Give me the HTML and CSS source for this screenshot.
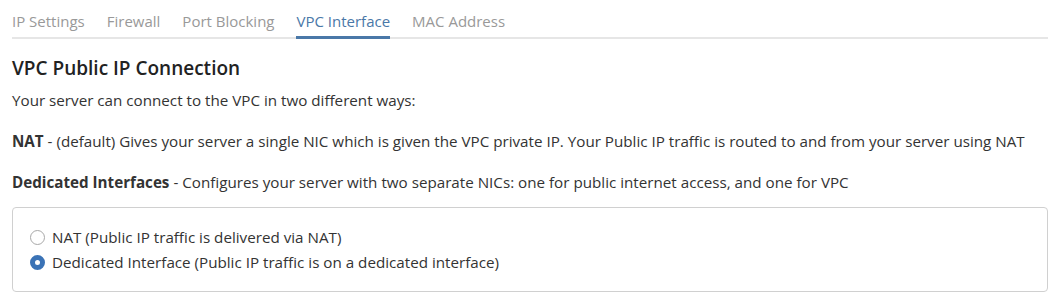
FILE: index.html
```html
<!DOCTYPE html>
<html lang="en">
<head>
    <meta charset="UTF-8">
    <title>VPC Interface</title>
    <link rel="stylesheet" href="styles.css">
</head>
<body>
    <div class="page">
        <ul class="tabs">
            <li class="tab">IP Settings</li>
            <li class="tab">Firewall</li>
            <li class="tab">Port Blocking</li>
            <li class="tab active">VPC Interface</li>
            <li class="tab">MAC Address</li>
        </ul>

        <h3 class="title">VPC Public IP Connection</h3>
        <p class="text intro">Your server can connect to the VPC in two different ways:</p>
        <p class="text"><b>NAT</b> - (default) Gives your server a single NIC which is given the VPC private IP. Your Public IP traffic is routed to and from your server using NAT</p>
        <p class="text"><b>Dedicated Interfaces</b> - Configures your server with two separate NICs: one for public internet access, and one for VPC</p>

        <div class="options">
            <label class="option">
                <input type="radio" name="mode" value="nat">
                <span>NAT (Public IP traffic is delivered via NAT)</span>
            </label>
            <label class="option">
                <input type="radio" name="mode" value="dedicated" checked>
                <span>Dedicated Interface (Public IP traffic is on a dedicated interface)</span>
            </label>
        </div>
    </div>
</body>
</html>
```

FILE: styles.css
```css
* {
    box-sizing: border-box;
    margin: 0;
    padding: 0;
}

body {
    font-family: 'Open Sans', 'Noto Sans', Arial, sans-serif;
    font-size: 15.2px;
    color: #333;
    background: white;
}

.page {
    padding: 0 12px;
}

.tabs {
    list-style: none;
    display: flex;
    gap: 22px;
    border-bottom: 2px solid #e6e6e6;
    height: 39px;
    padding-top: 9px;
}

.tab {
    color: #999;
    font-size: 15px;
    line-height: 24px;
    height: 30px;
    cursor: pointer;
}

.tab.active {
    color: #4a78a8;
    border-bottom: 3px solid #4a78a8;
}

.title {
    font-size: 19px;
    font-weight: 600;
    color: #222;
    margin-top: 16px;
    line-height: 26px;
}

.text {
    line-height: 22px;
    margin-top: 19px;
}

.text.intro {
    margin-top: 8px;
}

.options {
    margin-top: 14px;
    border: 1px solid #d0d0d0;
    border-radius: 4px;
    padding: 18px 16px 18px;
    display: flex;
    flex-direction: column;
    gap: 3px;
}

.option {
    display: flex;
    align-items: center;
    gap: 7px;
    line-height: 22px;
}

.option input {
    appearance: none;
    width: 15px;
    height: 15px;
    border: 1px solid #a8a8a8;
    border-radius: 50%;
    background: white;
    margin: 0 0 0 1px;
}

.option input:checked {
    border: 5px solid #3b73b6;
}
```
